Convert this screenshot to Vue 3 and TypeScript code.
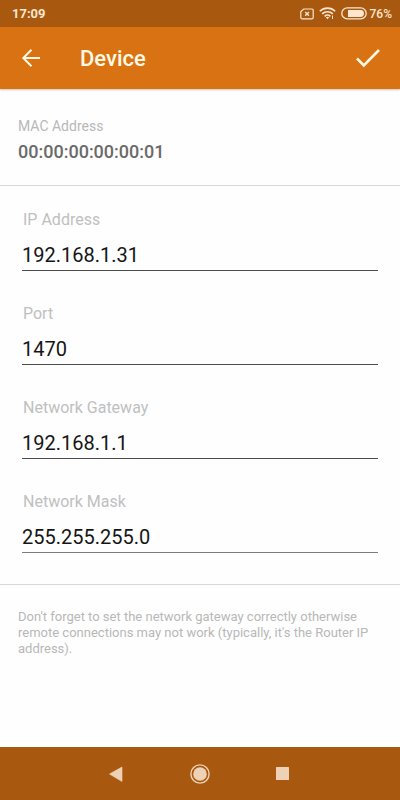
<script setup lang="ts">
import { reactive, ref } from 'vue'

interface Field {
  id: string
  label: string
  value: string
}

const macAddress = ref('00:00:00:00:00:01')

const fields = reactive<Field[]>([
  { id: 'ip', label: 'IP Address', value: '192.168.1.31' },
  { id: 'port', label: 'Port', value: '1470' },
  { id: 'gateway', label: 'Network Gateway', value: '192.168.1.1' },
  { id: 'mask', label: 'Network Mask', value: '255.255.255.0' },
])
</script>

<template>
  <div class="screen">
    <div class="status">
      <span class="time">17:09</span>
      <div class="indicators">
        <svg width="14" height="12" viewBox="0 0 14 12" fill="none" stroke="currentColor">
          <path d="M3.6 1H12a1.2 1.2 0 0 1 1.2 1.2v7.4A1.2 1.2 0 0 1 12 10.8H2A1.2 1.2 0 0 1 .8 9.6V3.8z" stroke-width="1.2" />
          <path d="M5.200 4l3.800 3.800M9 4L5.200 7.800" stroke-width="1.300" />
        </svg>
        <svg width="17" height="13" viewBox="0 0 17 13" fill="none" stroke="currentColor" stroke-width="1.6">
          <path d="M.8 4.300a11 11 0 0 1 15.400 0M3.200 6.900a7.500 7.500 0 0 1 10.600 0M5.600 9.300a4.200 4.200 0 0 1 5.800 0" />
          <path d="M6.800 10.400a2.600 2.600 0 0 1 3.400 0L8.500 12.300z" fill="currentColor" stroke="none" />
          <path d="M13.500 8.500v3.500" stroke-width="1" />
        </svg>
        <svg width="26" height="13" viewBox="0 0 26 13">
          <rect x="0.8" y="0.9" width="24.4" height="11" rx="5.5" fill="none" stroke="currentColor" stroke-width="1.3" />
          <path d="M7 3h12.500a3.400 3.400 0 0 1 0 6.900H7z" fill="currentColor" />
        </svg>
        <span class="percent">76%</span>
      </div>
    </div>

    <header class="bar">
      <button class="icon-button" type="button" aria-label="Back">
        <svg width="20" height="20" viewBox="0 0 20 20" fill="none" stroke="currentColor" stroke-width="2">
          <path d="M19 10H2.500M10.500 1.800L2.300 10l8.200 8.200" />
        </svg>
      </button>
      <h1>Device</h1>
      <button class="icon-button" type="button" aria-label="Save">
        <svg width="26" height="20" viewBox="0 0 26 20" fill="none" stroke="currentColor" stroke-width="2.6">
          <path d="M2 10.500l6.800 6.800L24 2" />
        </svg>
      </button>
    </header>

    <main>
      <section class="mac">
        <p class="mac-label">MAC Address</p>
        <p class="mac-value">{{ macAddress }}</p>
      </section>

      <form class="fields" @submit.prevent>
        <div v-for="field in fields" :key="field.id" class="field">
          <label :for="field.id">{{ field.label }}</label>
          <input :id="field.id" v-model="field.value" type="text" inputmode="decimal" />
        </div>
      </form>

      <p class="hint">
        Don't forget to set the network gateway correctly otherwise remote connections may not work
        (typically, it's the Router IP address).
      </p>
    </main>

    <nav class="system">
      <button type="button" aria-label="System back">
        <svg width="20" height="20" viewBox="0 0 20 20" fill="currentColor">
          <path d="M2.500 10L15 3v14.500z" stroke="currentColor" stroke-width="0.6" stroke-linejoin="round" />
        </svg>
      </button>
      <button type="button" aria-label="Home">
        <svg width="20" height="20" viewBox="0 0 20 20">
          <circle cx="10" cy="10" r="9.1" fill="none" stroke="currentColor" stroke-width="1.4" />
          <circle cx="10" cy="10" r="6.8" fill="currentColor" />
        </svg>
      </button>
      <button type="button" aria-label="Recent apps">
        <svg width="20" height="20" viewBox="0 0 20 20" fill="currentColor">
          <rect x="3" y="3" width="13" height="13" rx="0.5" />
        </svg>
      </button>
    </nav>
  </div>
</template>

<style>
body {
  margin: 0;
}
</style>

<style scoped>
.screen {
  display: flex;
  flex-direction: column;
  min-height: 100vh;
  background: #fefefe;
  font-family: Roboto, 'Liberation Sans', sans-serif;
}

svg {
  display: block;
}

p,
h1 {
  margin: 0;
}

button {
  display: flex;
  align-items: center;
  justify-content: center;
  padding: 0;
  border: 0;
  background: none;
  color: inherit;
}

.status {
  display: flex;
  align-items: center;
  justify-content: space-between;
  height: 27px;
  padding: 0 8px 0 12px;
  background: #a9590f;
  color: #fbe6d0;
}

.time {
  font-size: 13px;
  font-weight: 700;
}

.indicators {
  display: flex;
  align-items: center;
  gap: 5px;
}

.percent {
  margin-left: -2px;
  font-size: 12px;
  font-weight: 500;
}

.bar {
  display: flex;
  align-items: center;
  height: 62px;
  padding: 0 12px 0 11px;
  background: #d87212;
  box-shadow: 0 1px 2px rgba(120, 50, 0, 0.3);
  color: #fff8e4;
}

.icon-button {
  width: 40px;
  height: 40px;
}

h1 {
  flex: 1;
  padding: 2px 0 0 29px;
  font-size: 22px;
  font-weight: 500;
  line-height: 26px;
}

main {
  flex: 1;
}

.mac {
  padding: 27px 18px 22px;
  border-bottom: 1px solid #d8d8d8;
}

.mac-label {
  color: #b8b8b8;
  font-size: 14px;
  line-height: 20px;
}

.mac-value {
  padding-top: 5px;
  color: #6a6a6a;
  font-size: 18px;
  font-weight: 500;
  line-height: 22px;
}

.fields {
  display: flex;
  flex-direction: column;
  gap: 33px;
  padding: 24px 22px 31px;
  border-bottom: 1px solid #d8d8d8;
}

.field {
  display: flex;
  flex-direction: column;
}

label {
  padding-left: 1px;
  color: #c0c0c0;
  font-size: 16px;
  line-height: 20px;
}

input {
  width: 100%;
  height: 41px;
  box-sizing: border-box;
  margin: 0;
  padding: 10px 0 0;
  border: 0;
  border-bottom: 1px solid #4c4c4c;
  border-radius: 0;
  outline: none;
  background: none;
  color: #151515;
  font-family: inherit;
  font-size: 20px;
}

.field:last-child input {
  border-bottom-color: #7c7c7c;
}

.hint {
  padding: 24px 18px;
  color: #b8b8b8;
  font-size: 13px;
  line-height: 16px;
}

.system {
  display: flex;
  align-items: center;
  justify-content: center;
  gap: 22px;
  height: 53px;
  background: #a9590f;
  color: #eed2b8;
}

.system button {
  width: 61px;
  height: 53px;
}
</style>
